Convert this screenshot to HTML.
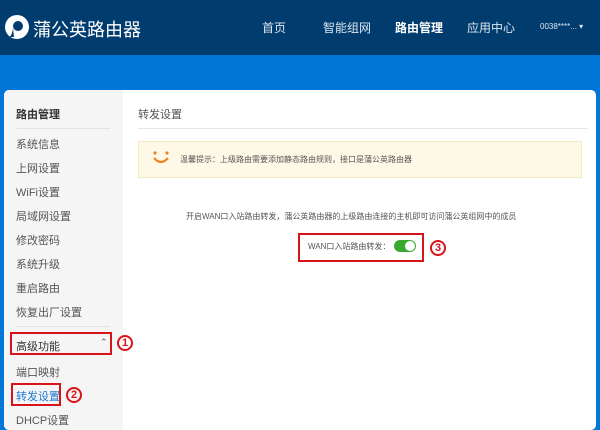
<!DOCTYPE html>
<html><head><meta charset="utf-8"><style>
*{margin:0;padding:0;box-sizing:border-box}
body{width:600px;height:423px;overflow:hidden;background:#0077d7;font-family:"Liberation Sans","Noto Sans CJK SC",sans-serif;position:relative}
.hdr{position:absolute;left:0;top:0;width:600px;height:55px;background:#003c6e}
.t{position:absolute;white-space:nowrap}
.panel{position:absolute;left:4px;top:90px;width:592px;height:340px;background:#fff;border-radius:5px;overflow:hidden}
.side{position:absolute;left:0;top:0;width:119px;height:340px;background:#f5f5f5}
.si{position:absolute;left:12px;font-size:11px;color:#555}
.red{position:absolute;border:2px solid #d8141b}
.num{position:absolute;width:16px;height:16px;border:2px solid #d8141b;border-radius:50%;color:#d8141b;font-size:11px;font-weight:bold;text-align:center;line-height:12px}
</style></head><body>
<div class="hdr"></div>
<svg class="t" style="left:4px;top:14px" width="26" height="26" viewBox="0 0 26 26"><circle cx="13" cy="13" r="12" fill="#fff"/><circle cx="14" cy="12" r="5" fill="#003c6e"/><path d="M9 14 Q8 22 5 23 L10 23Z" fill="#003c6e"/></svg>
<div class="t" style="left:33px;top:16px;font-size:18px;color:#fff">蒲公英路由器</div>
<div class="t" style="left:262px;top:19px;font-size:12px;color:#dde6f0">首页</div>
<div class="t" style="left:323px;top:19px;font-size:12px;color:#dde6f0">智能组网</div>
<div class="t" style="left:395px;top:19px;font-size:12px;color:#fff;font-weight:bold">路由管理</div>
<div class="t" style="left:467px;top:19px;font-size:12px;color:#dde6f0">应用中心</div>
<div class="t" style="left:540px;top:22px;font-size:8px;color:#dde6f0">0038****... ▾</div>
<div class="panel">
<div class="side">
<div class="si" style="top:16px;font-weight:bold;color:#333">路由管理</div>
<div style="position:absolute;left:13px;top:38px;width:93px;height:1px;background:#e3e3e3"></div>
<div class="si" style="top:46px">系统信息</div>
<div class="si" style="top:70px">上网设置</div>
<div class="si" style="top:94px">WiFi设置</div>
<div class="si" style="top:118px">局域网设置</div>
<div class="si" style="top:142px">修改密码</div>
<div class="si" style="top:166px">系统升级</div>
<div class="si" style="top:190px">重启路由</div>
<div class="si" style="top:214px">恢复出厂设置</div>
<div style="position:absolute;left:13px;top:236px;width:93px;height:1px;background:#e3e3e3"></div>
<div class="si" style="top:248px;color:#333">高级功能</div>
<div class="si" style="top:247px;left:96px;font-size:9px">⌃</div>
<div class="si" style="top:274px">端口映射</div>
<div class="si" style="top:298px;color:#1a7ad4">转发设置</div>
<div class="si" style="top:322px">DHCP设置</div>
</div>
<div class="t" style="left:134px;top:16px;font-size:11px;color:#555">转发设置</div>
<div style="position:absolute;left:134px;top:38px;width:450px;height:1px;background:#e6e6e6"></div>
<div style="position:absolute;left:134px;top:51px;width:444px;height:37px;background:#fdf9e6;border:1px solid #f5e9bf"></div>
<svg class="t" style="left:148px;top:61px" width="18" height="14" viewBox="0 0 18 14"><circle cx="3" cy="2" r="1.6" fill="#f08321"/><circle cx="15" cy="2" r="1.6" fill="#f08321"/><path d="M2 7 Q9 15 16 7" stroke="#f08321" stroke-width="2.2" fill="none"/></svg>
<div class="t" style="left:176px;top:64px;font-size:8px;color:#555">温馨提示：上级路由需要添加静态路由规则，接口是蒲公英路由器</div>
<div class="t" style="left:182px;top:121px;font-size:8px;color:#555">开启WAN口入站路由转发，蒲公英路由器的上级路由连接的主机即可访问蒲公英组网中的成员</div>
<div class="t" style="left:304px;top:151px;font-size:8px;color:#555">WAN口入站路由转发：</div>
<div style="position:absolute;left:390px;top:150px;width:22px;height:12px;border-radius:6px;background:#3aa82e"></div>
<div style="position:absolute;left:401px;top:151px;width:10px;height:10px;border-radius:5px;background:#fff"></div>
</div>
<div class="red" style="left:298px;top:233px;width:126px;height:29px"></div>
<div class="num" style="left:430px;top:240px">3</div>
<div class="red" style="left:10px;top:332px;width:102px;height:23px"></div>
<div class="num" style="left:117px;top:335px">1</div>
<div class="red" style="left:11px;top:383px;width:50px;height:23px"></div>
<div class="num" style="left:66px;top:387px">2</div>
</body></html>
